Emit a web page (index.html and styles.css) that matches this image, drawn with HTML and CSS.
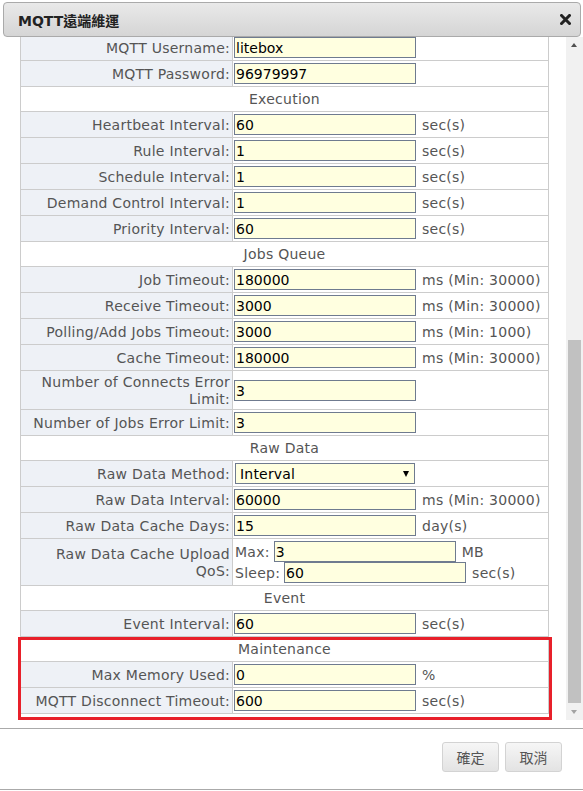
FILE: index.html
```html
<!DOCTYPE html>
<html>
<head>
<meta charset="utf-8">
<title>MQTT遠端維運</title>
<link rel="stylesheet" href="styles.css">
</head>
<body>
<div class="dialog">
  <div class="titlebar">
    <span class="title">MQTT遠端維運</span>
    <svg class="close" width="11" height="11" viewBox="0 0 11 11"><path d="M1.5 1.5 L9.5 9.5 M9.5 1.5 L1.5 9.5" stroke="#222" stroke-width="3" stroke-linecap="square"/></svg>
  </div>
  <div class="body">
    <div class="viewport">
      <table class="form">
        <tr><td class="lbl">MQTT Username:</td><td><div class="val"><input class="inp" value="litebox"></div></td></tr>
        <tr><td class="lbl">MQTT Password:</td><td><div class="val"><input class="inp" value="96979997"></div></td></tr>
        <tr><td class="hdr" colspan="2">Execution</td></tr>
        <tr><td class="lbl">Heartbeat Interval:</td><td><div class="val"><input class="inp" value="60"><span class="unit">sec(s)</span></div></td></tr>
        <tr><td class="lbl">Rule Interval:</td><td><div class="val"><input class="inp" value="1"><span class="unit">sec(s)</span></div></td></tr>
        <tr><td class="lbl">Schedule Interval:</td><td><div class="val"><input class="inp" value="1"><span class="unit">sec(s)</span></div></td></tr>
        <tr><td class="lbl">Demand Control Interval:</td><td><div class="val"><input class="inp" value="1"><span class="unit">sec(s)</span></div></td></tr>
        <tr><td class="lbl">Priority Interval:</td><td><div class="val"><input class="inp" value="60"><span class="unit">sec(s)</span></div></td></tr>
        <tr><td class="hdr" colspan="2">Jobs Queue</td></tr>
        <tr><td class="lbl">Job Timeout:</td><td><div class="val"><input class="inp" value="180000"><span class="unit">ms (Min: 30000)</span></div></td></tr>
        <tr><td class="lbl">Receive Timeout:</td><td><div class="val"><input class="inp" value="3000"><span class="unit">ms (Min: 30000)</span></div></td></tr>
        <tr><td class="lbl">Polling/Add Jobs Timeout:</td><td><div class="val"><input class="inp" value="3000"><span class="unit">ms (Min: 1000)</span></div></td></tr>
        <tr><td class="lbl">Cache Timeout:</td><td><div class="val"><input class="inp" value="180000"><span class="unit">ms (Min: 30000)</span></div></td></tr>
        <tr><td class="lbl">Number of Connects Error Limit:</td><td><div class="val"><input class="inp" value="3"></div></td></tr>
        <tr><td class="lbl">Number of Jobs Error Limit:</td><td><div class="val"><input class="inp" value="3"></div></td></tr>
        <tr><td class="hdr" colspan="2">Raw Data</td></tr>
        <tr><td class="lbl">Raw Data Method:</td><td><div class="val"><span class="select"><span class="select-text">Interval</span><span class="caret"></span></span></div></td></tr>
        <tr><td class="lbl">Raw Data Interval:</td><td><div class="val"><input class="inp" value="60000"><span class="unit">ms (Min: 30000)</span></div></td></tr>
        <tr><td class="lbl">Raw Data Cache Days:</td><td><div class="val"><input class="inp" value="15"><span class="unit">day(s)</span></div></td></tr>
        <tr><td class="lbl">Raw Data Cache Upload<br>QoS:</td><td>
          <div class="val"><span class="pre">Max:</span><input class="inp" value="3"><span class="unit">MB</span></div>
          <div class="val"><span class="pre">Sleep:</span><input class="inp" value="60"><span class="unit">sec(s)</span></div>
        </td></tr>
        <tr><td class="hdr" colspan="2">Event</td></tr>
        <tr><td class="lbl">Event Interval:</td><td><div class="val"><input class="inp" value="60"><span class="unit">sec(s)</span></div></td></tr>
        <tr><td class="hdr" colspan="2">Maintenance</td></tr>
        <tr><td class="lbl">Max Memory Used:</td><td><div class="val"><input class="inp" value="0"><span class="unit">%</span></div></td></tr>
        <tr><td class="lbl">MQTT Disconnect Timeout:</td><td><div class="val"><input class="inp" value="600"><span class="unit">sec(s)</span></div></td></tr>
      </table>
    </div>
    <div class="scrollbar">
      <div class="arrow up"></div>
      <div class="track"><div class="thumb"></div></div>
      <div class="arrow down"></div>
    </div>
    <div class="highlight"></div>
  </div>
  <div class="footer">
    <button class="btn">確定</button>
    <button class="btn">取消</button>
  </div>
</div>
</body>
</html>
```
FILE: styles.css
```css
html, body {
  margin: 0;
  padding: 0;
  background: #fff;
}
body {
  font-family: "DejaVu Sans", Verdana, "Noto Sans CJK TC", sans-serif;
  font-size: 14px;
  color: #555;
}
.dialog {
  width: 583px;
  height: 791px;
  position: relative;
  overflow: hidden;
  background: #fff;
}
.titlebar {
  box-sizing: border-box;
  margin: 2px 2px 0 3px;
  height: 35px;
  border: 1px solid #aaa;
  border-radius: 4px;
  background: linear-gradient(#e9e9e9, #d5d5d5);
  display: flex;
  align-items: center;
  justify-content: space-between;
  padding: 0 9px 0 14px;
}
.title {
  font-family: "DejaVu Sans", Verdana, "Noto Sans CJK TC", sans-serif;
  font-weight: bold;
  font-size: 14px;
  color: #222;
}
.close {
  display: block;
}
.body {
  position: relative;
  display: flex;
  height: 683px;
}
.viewport {
  flex: 1;
  overflow: hidden;
  padding-left: 20px;
}
.form {
  border-collapse: collapse;
  width: 529px;
  margin-top: -3px;
  border: 1px solid #ccc;
}
.form td {
  border: 1px solid #ccc;
  padding: 2px 0;
  line-height: 17px;
  vertical-align: middle;
}
.form td.lbl {
  width: 207px;
  background: #eef1f6;
  text-align: right;
  padding: 3px 2px 1px 2px;
  letter-spacing: 0.25px;
}
.form td.hdr {
  text-align: center;
  padding: 4px 0 3px;
  background: #fff;
  letter-spacing: 0.25px;
}
.form td + td {
  padding-left: 1px;
}
.val {
  display: flex;
  align-items: center;
  height: 21px;
  white-space: nowrap;
}
.inp {
  box-sizing: border-box;
  width: 182px;
  height: 21px;
  margin: 0;
  padding: 1px 1px 0;
  border: 1px solid #6f7b8f;
  background: #ffffe0;
  font-family: "DejaVu Sans", Verdana, sans-serif;
  font-size: 14px;
  color: #000;
  outline: none;
}
.unit {
  margin-left: 6px;
  letter-spacing: 0.25px;
  padding-top: 2px;
}
.pre {
  margin-right: 4px;
  margin-left: 1px;
  letter-spacing: 0.25px;
  padding-top: 2px;
}
.select {
  box-sizing: border-box;
  position: relative;
  display: flex;
  align-items: center;
  width: 180px;
  height: 21px;
  margin-left: 1px;
  border: 1px solid #6f7b8f;
  background: #ffffe0;
  color: #000;
  padding: 1px 0 0 4px;
  letter-spacing: 0.2px;
}
.caret {
  position: absolute;
  right: 5px;
  top: 7px;
  width: 0;
  height: 0;
  border-left: 3.5px solid transparent;
  border-right: 3.5px solid transparent;
  border-top: 6px solid #000;
}
.scrollbar {
  width: 17px;
  background: #f1f1f1;
  display: flex;
  flex-direction: column;
}
.arrow {
  height: 17px;
  position: relative;
}
.arrow::after {
  content: "";
  position: absolute;
  left: 5px;
  width: 0;
  height: 0;
  border-left: 3.5px solid transparent;
  border-right: 3.5px solid transparent;
}
.arrow.up::after {
  top: 6px;
  border-bottom: 4px solid #505050;
}
.arrow.down::after {
  top: 7px;
  border-top: 4px solid #a3a3a3;
}
.track {
  flex: 1;
  position: relative;
}
.thumb {
  position: absolute;
  left: 2px;
  right: 2px;
  top: 286px;
  bottom: 0;
  background: #c1c1c1;
}
.highlight {
  position: absolute;
  left: 18px;
  top: 600px;
  width: 534px;
  height: 83px;
  box-sizing: border-box;
  border: 3px solid #e8202a;
  pointer-events: none;
}
.footer {
  margin-top: 8px;
  border-top: 1px solid #aaa;
  border-bottom: 1px solid #aaa;
  height: 62px;
  box-sizing: border-box;
  display: flex;
  justify-content: flex-end;
  align-items: flex-start;
  gap: 6px;
  padding: 13px 21px 0 0;
}
.btn {
  width: 57px;
  height: 30px;
  margin: 0;
  border: 1px solid #d3d3d3;
  border-radius: 3px;
  background: linear-gradient(#f6f6f6, #e3e3e3);
  font-family: "Noto Sans CJK TC", sans-serif;
  font-size: 14px;
  color: #555;
  padding: 0;
}
```
